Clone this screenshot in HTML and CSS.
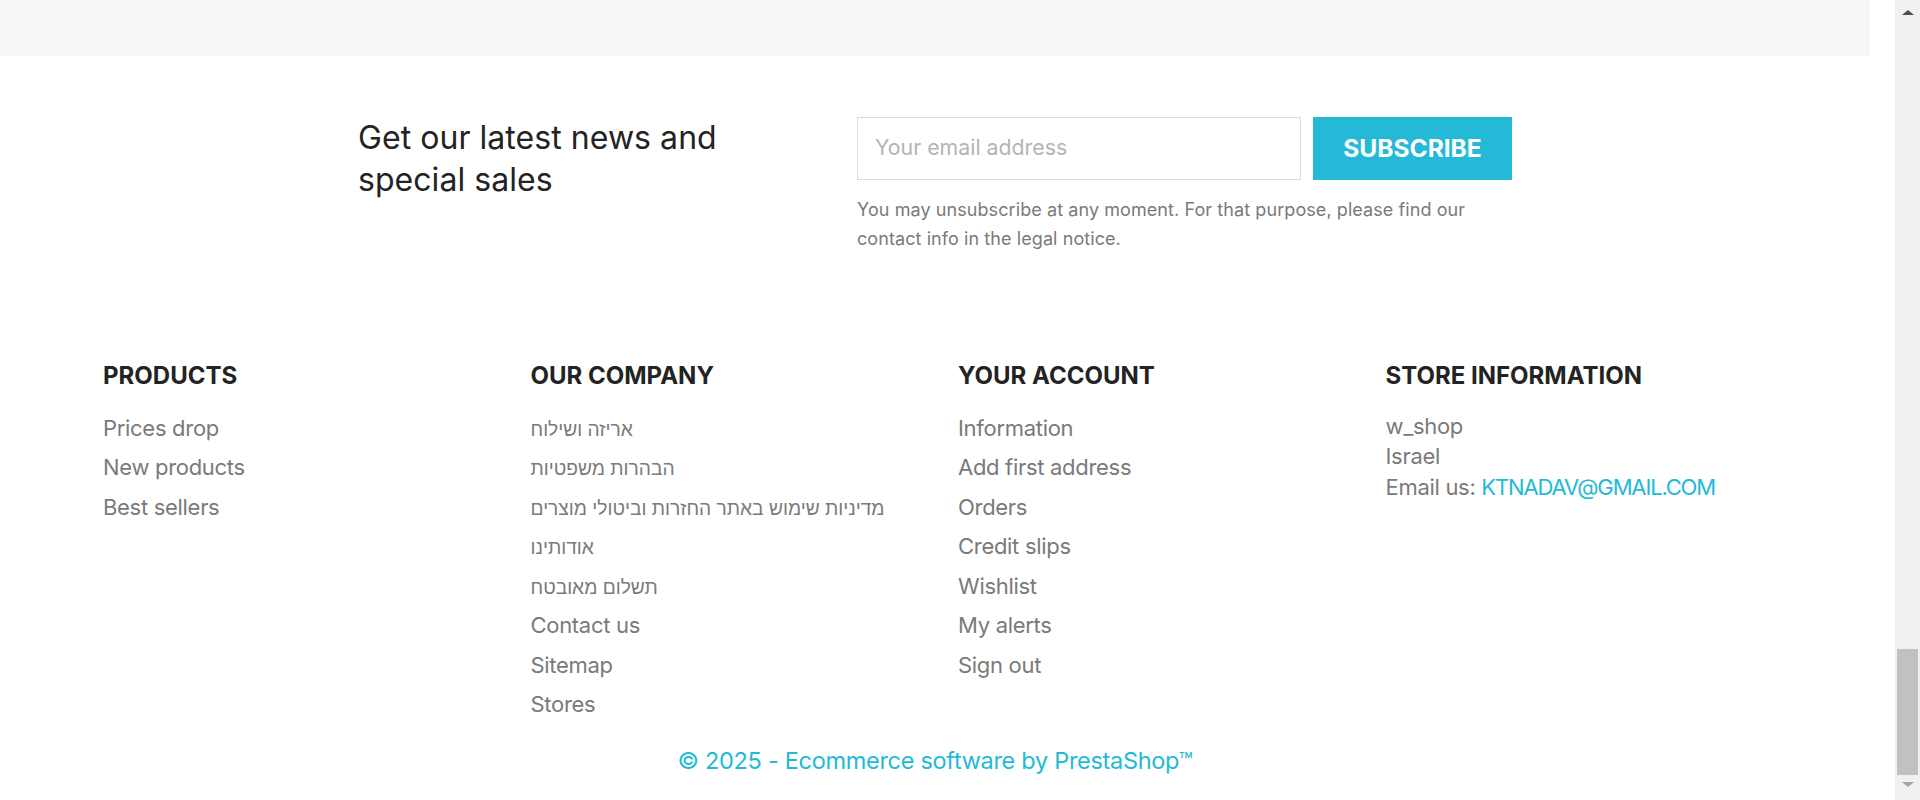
FILE: index.html
```html
<!DOCTYPE html>
<html lang="en">
<head>
<meta charset="utf-8">
<title>Footer</title>
<link rel="stylesheet" href="styles.css">
</head>
<body>
<div class="viewport">
  <div class="page">
    <div class="topband"></div>

    <section class="newsletter">
      <h2 class="newsletter-title">Get our latest news and<br>special sales</h2>
      <div class="newsletter-form">
        <div class="form-row">
          <input class="email-input" type="text" placeholder="Your email address">
          <button class="subscribe-btn" type="button">SUBSCRIBE</button>
        </div>
        <p class="form-hint">You may unsubscribe at any moment. For that purpose, please find our contact info in the legal notice.</p>
      </div>
    </section>

    <footer class="footer">
      <div class="footer-cols">
        <div class="footer-col">
          <h3 class="col-title">PRODUCTS</h3>
          <ul class="link-list">
            <li><a href="#">Prices drop</a></li>
            <li><a href="#">New products</a></li>
            <li><a href="#">Best sellers</a></li>
          </ul>
        </div>
        <div class="footer-col">
          <h3 class="col-title">OUR COMPANY</h3>
          <ul class="link-list">
            <li><a href="#" class="he" dir="rtl">אריזה ושילוח</a></li>
            <li><a href="#" class="he" dir="rtl">הבהרות משפטיות</a></li>
            <li><a href="#" class="he" dir="rtl">מדיניות שימוש באתר החזרות וביטולי מוצרים</a></li>
            <li><a href="#" class="he" dir="rtl">אודותינו</a></li>
            <li><a href="#" class="he" dir="rtl">תשלום מאובטח</a></li>
            <li><a href="#">Contact us</a></li>
            <li><a href="#">Sitemap</a></li>
            <li><a href="#">Stores</a></li>
          </ul>
        </div>
        <div class="footer-col">
          <h3 class="col-title">YOUR ACCOUNT</h3>
          <ul class="link-list">
            <li><a href="#">Information</a></li>
            <li><a href="#">Add first address</a></li>
            <li><a href="#">Orders</a></li>
            <li><a href="#">Credit slips</a></li>
            <li><a href="#">Wishlist</a></li>
            <li><a href="#">My alerts</a></li>
            <li><a href="#">Sign out</a></li>
          </ul>
        </div>
        <div class="footer-col">
          <h3 class="col-title">STORE INFORMATION</h3>
          <div class="store-info">
            <div>w_shop</div>
            <div>Israel</div>
            <div>Email us: <a href="#" class="mail">KTNADAV@GMAIL.COM</a></div>
          </div>
        </div>
      </div>
      <p class="copyright"><a href="#">© 2025 - Ecommerce software by PrestaShop™</a></p>
    </footer>
  </div>
  <div class="gutter"></div>
  <div class="scrollbar">
    <div class="arrow-up"></div>
    <div class="track"><div class="thumb"></div></div>
    <div class="arrow-down"></div>
  </div>
</div>
</body>
</html>
```

FILE: styles.css
```css
* { box-sizing: border-box; }

html, body {
  margin: 0;
  padding: 0;
  background: #ffffff;
}

body {
  font-family: "Inter", "Liberation Sans", sans-serif;
  color: #7a7a7a;
}

a { text-decoration: none; color: inherit; }

.viewport {
  display: flex;
  width: 1920px;
  height: 800px;
  overflow: hidden;
}

.page {
  width: 1870px;
  flex: none;
}

.gutter {
  width: 25px;
  flex: none;
  background: #ffffff;
}

/* top gray band */
.topband {
  height: 56px;
  background: #f6f6f6;
}

/* newsletter */
.newsletter {
  display: flex;
  padding: 61px 0 0 358px;
}

.newsletter-title {
  width: 499px;
  margin: 0;
  font-size: 32px;
  line-height: 41.6px;
  font-weight: 400;
  color: #232323;
  letter-spacing: 0.05px;
}

.newsletter-form {
  width: 655px;
}

.form-row {
  display: flex;
  gap: 12px;
}

.email-input {
  width: 444px;
  height: 63px;
  border: 1px solid #dcdcdc;
  padding: 0 0 3px 17px;
  font-family: inherit;
  font-size: 21.3px;
  color: #232323;
  outline: none;
  background: #fff;
}

.email-input::placeholder {
  color: #b4b4b4;
}

.subscribe-btn {
  width: 199px;
  height: 63px;
  border: none;
  background: #24b9d7;
  color: #ffffff;
  font-family: inherit;
  font-size: 24.5px;
  font-weight: 700;
  padding: 0 0 2px;
  letter-spacing: 0;
}

.form-hint {
  margin: 15px 0 0;
  font-size: 18px;
  line-height: 29px;
  letter-spacing: 0.08px;
  color: #7a7a7a;
}

/* footer */
.footer {
  padding-top: 109px;
}

.footer-cols {
  display: grid;
  grid-template-columns: repeat(4, 427.5px);
  padding-left: 103px;
}

.col-title {
  margin: 0;
  font-size: 24px;
  line-height: 28.8px;
  font-weight: 700;
  color: #232323;
}

.link-list {
  list-style: none;
  margin: 18px 0 0;
  padding: 0;
}

.link-list li {
  height: 39.5px;
  font-size: 22px;
  line-height: 39.5px;
  letter-spacing: -0.3px;
}

.link-list .he {
  font-family: "Liberation Sans", "DejaVu Sans", sans-serif;
  font-size: 19.2px;
  letter-spacing: 0;
}

.store-info {
  margin-top: 20px;
  font-size: 22px;
  line-height: 30.5px;
  letter-spacing: -0.3px;
}

.store-info .mail {
  color: #24b9d7;
  letter-spacing: -1.15px;
}

.copyright {
  margin: 19px 0 0;
  text-align: center;
  font-size: 23.5px;
  line-height: 34.5px;
  letter-spacing: -0.3px;
}

.copyright a {
  color: #24b9d7;
}

/* fake scrollbar */
.scrollbar {
  width: 25px;
  flex: none;
  background: #f0f0f0;
  display: flex;
  flex-direction: column;
  align-items: center;
}

.arrow-up {
  margin-top: 10px;
  width: 0;
  height: 0;
  border-left: 6px solid transparent;
  border-right: 6px solid transparent;
  border-bottom: 5px solid #505050;
}

.track {
  flex: 1;
  width: 100%;
  display: flex;
  flex-direction: column;
  justify-content: flex-end;
  align-items: center;
  padding-bottom: 7px;
}

.thumb {
  width: 21px;
  height: 126px;
  background: #c1c1c1;
}

.arrow-down {
  margin-bottom: 13px;
  width: 0;
  height: 0;
  border-left: 6px solid transparent;
  border-right: 6px solid transparent;
  border-top: 5px solid #a3a3a3;
}
```
